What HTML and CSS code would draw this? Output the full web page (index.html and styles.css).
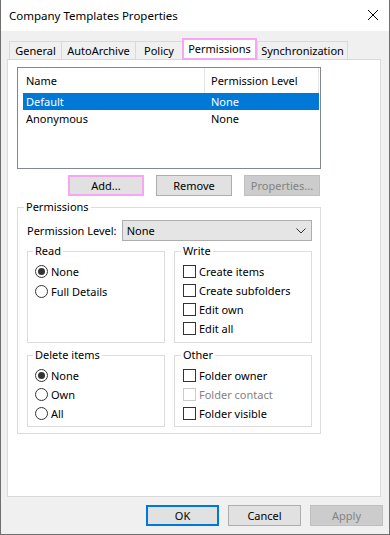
FILE: index.html
```html
<!DOCTYPE html>
<html lang="en">
<head>
  <meta charset="UTF-8" />
  <title>Company Templates Properties</title>
  <link rel="stylesheet" href="styles.css">
</head>
<body>
  <div class="window">
    <div class="titlebar">
      <span class="title">Company Templates Properties</span>
      <svg class="close" width="12" height="12" viewBox="0 0 12 12">
        <path d="M1 1 L11 11 M11 1 L1 11" stroke="#000" stroke-width="1" fill="none" />
      </svg>
    </div>

    <div class="content">
      <!-- Tab strip -->
      <div class="tabs">
        <div class="tab tab-general">General</div>
        <div class="tab tab-archive">AutoArchive</div>
        <div class="tab tab-policy">Policy</div>
        <div class="tab tab-permissions active">Permissions</div>
        <div class="tab tab-sync">Synchronization</div>
      </div>

      <div class="panel">
        <!-- User list -->
        <div class="list">
          <div class="list-head">
            <span class="col-name">Name</span>
            <span class="col-level">Permission Level</span>
          </div>
          <div class="list-row selected">
            <span class="col-name">Default</span>
            <span class="col-level">None</span>
          </div>
          <div class="list-row">
            <span class="col-name">Anonymous</span>
            <span class="col-level">None</span>
          </div>
        </div>

        <div class="list-buttons">
          <button type="button" class="btn btn-marked">Add...</button>
          <button type="button" class="btn">Remove</button>
          <button type="button" class="btn" disabled>Properties...</button>
        </div>

        <!-- Permissions group -->
        <fieldset class="group group-main">
          <legend>Permissions</legend>
          <div class="level-row">
            <span class="level-label">Permission Level:</span>
            <div class="select">
              <span>None</span>
              <svg class="chevron" width="10" height="6" viewBox="0 0 10 6">
                <path d="M0.5 0.5 L5 5 L9.5 0.5" stroke="#333" stroke-width="1" fill="none" />
              </svg>
            </div>
          </div>

          <div class="group-grid">
            <fieldset class="group sub read">
              <legend>Read</legend>
              <div class="option"><span class="radio checked"></span>None</div>
              <div class="option"><span class="radio"></span>Full Details</div>
            </fieldset>

            <fieldset class="group sub write">
              <legend>Write</legend>
              <div class="option"><span class="check"></span>Create items</div>
              <div class="option"><span class="check"></span>Create subfolders</div>
              <div class="option"><span class="check"></span>Edit own</div>
              <div class="option"><span class="check"></span>Edit all</div>
            </fieldset>

            <fieldset class="group sub delete">
              <legend>Delete items</legend>
              <div class="option"><span class="radio checked"></span>None</div>
              <div class="option"><span class="radio"></span>Own</div>
              <div class="option"><span class="radio"></span>All</div>
            </fieldset>

            <fieldset class="group sub other">
              <legend>Other</legend>
              <div class="option"><span class="check"></span>Folder owner</div>
              <div class="option disabled"><span class="check"></span>Folder contact</div>
              <div class="option"><span class="check"></span>Folder visible</div>
            </fieldset>
          </div>
        </fieldset>
      </div>

      <div class="dialog-buttons">
        <button type="button" class="btn btn-default">OK</button>
        <button type="button" class="btn">Cancel</button>
        <button type="button" class="btn" disabled>Apply</button>
      </div>
    </div>
  </div>
</body>
</html>
```

FILE: styles.css
```css
* {
  box-sizing: border-box;
}
body {
  margin: 0;
  font-family: 'Noto Sans', sans-serif;
  font-size: 11px;
  color: #000;
  background: #fff;
}
.window {
  width: 390px;
  height: 535px;
  border: 1px solid #6f6f6f;
  border-top: none;
  background: #f0f0f0;
  display: flex;
  flex-direction: column;
}
.titlebar {
  height: 31px;
  background: #fff;
  display: flex;
  align-items: center;
  justify-content: space-between;
  padding: 0 10px 0 8px;
  flex-shrink: 0;
}
.title {
  font-size: 11.5px;
  line-height: 16px;
}
.close {
  margin-top: -1px;
}
.content {
  padding: 6px 0 0 6px;
}
/* Tabs */
.tabs {
  display: flex;
  align-items: flex-end;
  height: 22px;
  padding-left: 2px;
}
.tab {
  height: 18px;
  line-height: 18px;
  text-align: center;
  border: 1px solid #d9d9d9;
  border-bottom: none;
  border-right: none;
  background: #f0f0f0;
}
.tab-general { width: 52px; }
.tab-archive { width: 74px; }
.tab-policy { width: 47px; }
.tab-sync { width: 91px; border-right: 1px solid #d9d9d9; }
.tab.active {
  width: 75px;
  height: 22px;
  line-height: 17px;
  background: #fff;
  border: 2px solid #f7a6f3;
  margin-bottom: -1px;
  position: relative;
  z-index: 1;
}
.panel {
  width: 374px;
  height: 438px;
  background: #fff;
  border: 1px solid #d9d9d9;
  padding: 7px 0 0 9px;
}
/* List view */
.list {
  width: 304px;
  height: 102px;
  border: 1px solid #828790;
  padding-left: 5px;
}
.list-head {
  display: flex;
  height: 25px;
  align-items: center;
}
.list-head .col-name,
.list-head .col-level {
  border-right: 1px solid #e5e5e5;
  height: 100%;
  display: flex;
  align-items: center;
}
.col-name {
  width: 182px;
  padding-left: 3px;
}
.col-level {
  width: 114px;
  padding-left: 6px;
}
.list-row {
  display: flex;
  height: 17px;
  line-height: 17px;
  width: 296px;
}
.list-row.selected {
  background: #0078d7;
  color: #fff;
}
/* Buttons */
.btn {
  font-family: inherit;
  font-size: 11px;
  color: #000;
  height: 21px;
  width: 76px;
  padding: 0;
  background: #e1e1e1;
  border: 1px solid #adadad;
  border-radius: 0;
}
.btn:disabled {
  background: #cccccc;
  border-color: #bfbfbf;
  color: #838383;
}
.btn-marked {
  border: 2px solid #f7a6f3;
}
.btn-default {
  border: 2px solid #0078d7;
}
.list-buttons {
  width: 303px;
  display: flex;
  justify-content: flex-end;
  gap: 12px;
  margin-top: 6px;
}
/* Group boxes */
.group {
  margin: 0;
  border: 1px solid #dcdcdc;
  padding: 0;
  min-width: 0;
}
.group legend {
  padding: 0 2px;
  margin-left: -2px;
  line-height: 14px;
}
.group-main {
  width: 304px;
  margin-top: 4px;
  padding: 0 8px 6px 9px;
}
.group-main > legend {
  margin-left: -3px;
}
.level-row {
  display: flex;
  align-items: center;
  margin-top: 6px;
}
.level-label {
  width: 95px;
  white-space: nowrap;
}
.select {
  width: 191px;
  height: 21px;
  background: #e5e5e5;
  border: 1px solid #adadad;
  display: flex;
  align-items: center;
  justify-content: space-between;
  padding: 0 5px 0 4px;
}
.group-grid {
  display: grid;
  grid-template-columns: 138px 138px;
  column-gap: 9px;
  row-gap: 5px;
  margin-top: 3px;
}
.sub {
  padding: 4px 0 4px 7px;
}
.sub.write,
.sub.other {
  padding-left: 8px;
}
.sub.delete,
.sub.other {
  padding-bottom: 3px;
}
.option {
  display: flex;
  align-items: center;
  height: 19px;
}
.read .option + .option {
  margin-top: 1px;
}
.option.disabled {
  color: #838383;
}
.radio {
  width: 13px;
  height: 13px;
  border: 1px solid #333;
  border-radius: 50%;
  margin-right: 3px;
  display: flex;
  align-items: center;
  justify-content: center;
  background: #fff;
}
.radio.checked::after {
  content: "";
  width: 7px;
  height: 7px;
  border-radius: 50%;
  background: #333;
}
.check {
  width: 13px;
  height: 13px;
  border: 1px solid #333;
  background: #fff;
  margin-right: 3px;
}
.option.disabled .check {
  border-color: #cccccc;
}
/* Dialog buttons */
.dialog-buttons {
  display: flex;
  gap: 9px;
  justify-content: flex-end;
  padding-right: 6px;
  margin-top: 8px;
}
.dialog-buttons .btn {
  width: 73px;
}
```
